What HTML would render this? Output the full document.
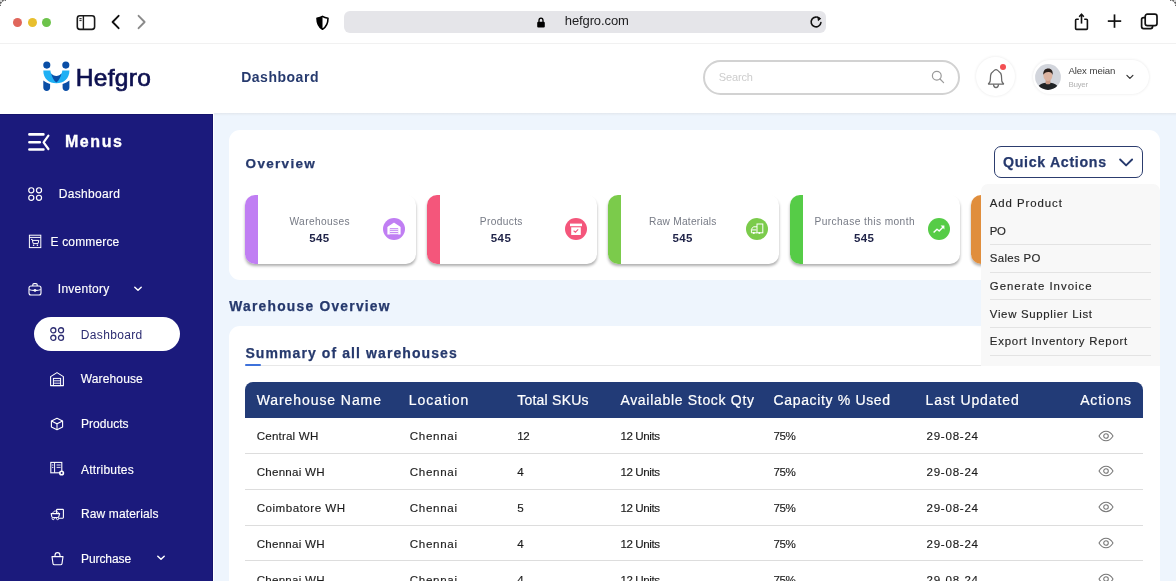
<!DOCTYPE html>
<html><head><meta charset="utf-8"><style>
*{box-sizing:border-box;margin:0;padding:0}
html,body{will-change:transform;width:1176px;height:581px;overflow:hidden;background:#fff;font-family:"Liberation Sans",sans-serif}
.a{position:absolute}
.t{position:absolute;line-height:1;white-space:nowrap}
.sk{-webkit-text-stroke:0.3px currentColor}
svg{overflow:visible}
</style></head><body>
<div class="a" style="left:0px;top:0px;width:1176px;height:44px;background:#fff"></div>
<div class="a" style="left:0px;top:43px;width:1176px;height:1px;background:#f1f1f1"></div>
<div class="a" style="left:13.299999999999999px;top:17.7px;width:9.2px;height:9.2px;border-radius:50%;background:#e0665b"></div>
<div class="a" style="left:27.9px;top:17.7px;width:9.2px;height:9.2px;border-radius:50%;background:#e8bf2e"></div>
<div class="a" style="left:42.199999999999996px;top:17.7px;width:9.2px;height:9.2px;border-radius:50%;background:#6dc34b"></div>
<svg class="a" style="left:0px;top:0px" width="8" height="8" viewBox="0 0 8 8"><path d="M0 0 H6 A6 6 0 0 0 0 6 Z" fill="#d6d6d6"/><path d="M6 0 A6 6 0 0 0 0 6" fill="none" stroke="#111" stroke-width="1.2" stroke-dasharray="1.4 1.2"/></svg>
<svg class="a" style="left:1168px;top:0px" width="8" height="8" viewBox="0 0 8 8"><path d="M8 0 H2 A6 6 0 0 1 8 6 Z" fill="#d6d6d6"/><path d="M2 0 A6 6 0 0 1 8 6" fill="none" stroke="#111" stroke-width="1.2" stroke-dasharray="1.4 1.2"/></svg>
<svg class="a" style="left:76px;top:14px" width="20" height="17" viewBox="0 0 20 17"><rect x="1.3" y="1.8" width="17.3" height="13.6" rx="2.6" fill="none" stroke="#1a1a1a" stroke-width="1.6"/><line x1="7.4" y1="2" x2="7.4" y2="15.4" stroke="#1a1a1a" stroke-width="1.4"/><rect x="3.4" y="4" width="2.2" height="1.2" fill="#333"/><rect x="3.4" y="5.9" width="2.2" height="1.2" fill="#333"/></svg>
<svg class="a" style="left:110px;top:14px" width="12" height="16" viewBox="0 0 12 16"><path d="M8.6 1.8 L2.6 8 L8.6 14.2" fill="none" stroke="#111" stroke-width="1.9" stroke-linecap="round" stroke-linejoin="round"/></svg>
<svg class="a" style="left:136px;top:14px" width="12" height="16" viewBox="0 0 12 16"><path d="M2.6 1.8 L8.6 8 L2.6 14.2" fill="none" stroke="#8a8a8a" stroke-width="1.9" stroke-linecap="round" stroke-linejoin="round"/></svg>
<svg class="a" style="left:314px;top:14px" width="17" height="17" viewBox="0 0 17 17"><path d="M8.5 2.4 C6.8 3.4 4.8 3.9 3 4.2 C3 9.2 4.6 12.8 8.5 15.3 C12.4 12.8 14 9.2 14 4.2 C12.2 3.9 10.2 3.4 8.5 2.4 Z" fill="#fff" stroke="#000" stroke-width="1.6" stroke-linejoin="round"/><path d="M8.5 2.4 C6.8 3.4 4.8 3.9 3 4.2 C3 9.2 4.6 12.8 8.5 15.3 Z" fill="#000"/></svg>
<div class="a" style="left:344px;top:11px;width:482px;height:22px;background:#e5e5e9;border-radius:6px"></div>
<svg class="a" style="left:535px;top:15px" width="12" height="14" viewBox="0 0 12 14"><path d="M4 7 V5.6 C4 4 4.9 3.2 6 3.2 C7.1 3.2 8 4 8 5.6 V7" fill="none" stroke="#000" stroke-width="1.3"/><rect x="2.2" y="6.8" width="7.6" height="5.8" rx="1.1" fill="#000"/></svg>
<div class="t" style="left:564.80px;top:13.95px;font-size:13px;letter-spacing:-0.111px;color:#1d1d1f">hefgro.com</div>
<svg class="a" style="left:808px;top:14px" width="16" height="16" viewBox="0 0 16 16"><path d="M11.6 4.6 A4.9 4.9 0 1 0 12.9 8.6" fill="none" stroke="#111" stroke-width="1.6" stroke-linecap="round"/><path d="M9.2 2.2 L13.2 4.4 L10 7.2 Z" fill="#111"/></svg>
<svg class="a" style="left:1073px;top:12px" width="17" height="19" viewBox="0 0 17 19"><path d="M5.8 7.2 H3.6 C3 7.2 2.6 7.6 2.6 8.2 V16.4 C2.6 17 3 17.4 3.6 17.4 H13.4 C14 17.4 14.4 17 14.4 16.4 V8.2 C14.4 7.6 14 7.2 13.4 7.2 H11.2" fill="none" stroke="#111" stroke-width="1.6"/><line x1="8.5" y1="3" x2="8.5" y2="11.6" stroke="#111" stroke-width="1.6"/><path d="M6.2 4.8 L8.5 2.2 L10.8 4.8" fill="none" stroke="#111" stroke-width="1.6" stroke-linejoin="round"/></svg>
<svg class="a" style="left:1106px;top:13px" width="17" height="17" viewBox="0 0 17 17"><line x1="8.5" y1="1.4" x2="8.5" y2="14.8" stroke="#111" stroke-width="1.7"/><line x1="1.8" y1="8.1" x2="15.2" y2="8.1" stroke="#111" stroke-width="1.7"/></svg>
<svg class="a" style="left:1139px;top:12px" width="20" height="19" viewBox="0 0 20 19"><rect x="6.2" y="2.2" width="11.8" height="11.4" rx="2.2" fill="none" stroke="#111" stroke-width="1.7"/><path d="M6 5.6 H4.6 C3.4 5.6 2.6 6.4 2.6 7.6 V14.6 C2.6 15.8 3.4 16.6 4.6 16.6 H11.6 C12.8 16.6 13.6 15.8 13.6 14.6 V14" fill="none" stroke="#111" stroke-width="1.7"/></svg>
<div class="a" style="left:0px;top:44px;width:1176px;height:70px;background:#fff"></div>
<svg class="a" style="left:40px;top:58px" width="32" height="36" viewBox="0 0 32 36">
<path d="M3.3 12.4 H10.4 C10.6 16 13 18.1 16.35 18.1 C19.7 18.1 22.1 16 22.3 12.4 H29.4 C29.4 20.6 23.6 25.2 16.35 25.2 C9.1 25.2 3.3 20.6 3.3 12.4 Z" fill="#1fb0f4"/>
<path d="M11.2 15.6 C12.6 17.3 14.3 18.1 16.35 18.1 C18.4 18.1 20.1 17.3 21.5 15.6 C20.6 19.6 18.8 22.8 16.35 24.6 C13.9 22.8 12.1 19.6 11.2 15.6 Z" fill="#0a4ea6"/>
<circle cx="6.8" cy="7.1" r="3.55" fill="#0a4ea6"/><circle cx="25.8" cy="7.1" r="3.55" fill="#0a4ea6"/>
<path d="M3.3 22.6 C5.2 24.2 7.4 25.2 10.1 25.9 V29.6 C10.1 31.6 8.6 33 6.7 33 C4.8 33 3.3 31.6 3.3 29.6 Z" fill="#0a4ea6"/>
<path d="M29.4 22.6 C27.5 24.2 25.3 25.2 22.6 25.9 V29.6 C22.6 31.6 24.1 33 26 33 C27.9 33 29.4 31.6 29.4 29.6 Z" fill="#0a4ea6"/>
</svg>
<div class="t" style="left:75.80px;top:66.08px;font-size:24.5px;letter-spacing:0.298px;color:#0e1150;-webkit-text-stroke:0.7px #0e1150">Hefgro</div>
<div class="t" style="left:241.20px;top:70.40px;font-size:14px;letter-spacing:0.516px;font-weight:bold;color:#263a6e">Dashboard</div>
<div class="a" style="left:703px;top:59.5px;width:257px;height:35.5px;border:2px solid #d2d2d2;border-radius:18px;background:#fff"></div>
<div class="t" style="left:718.70px;top:71.95px;font-size:11px;letter-spacing:-0.127px;color:#cdcdcd">Search</div>
<svg class="a" style="left:930px;top:69px" width="16" height="16" viewBox="0 0 16 16"><circle cx="6.8" cy="6.8" r="4.4" fill="none" stroke="#9a9a9a" stroke-width="1.2"/><line x1="10" y1="10" x2="13.6" y2="13.6" stroke="#9a9a9a" stroke-width="1.2" stroke-linecap="round"/></svg>
<div class="a" style="left:976px;top:56.6px;width:39px;height:39.8px;border-radius:50%;background:#fff;box-shadow:0 0 3px rgba(0,0,0,0.10)"></div>
<svg class="a" style="left:986px;top:67px" width="20" height="24" viewBox="0 0 20 24"><path d="M10 2.6 C9 2.6 8.4 3.4 7.4 4.2 C5.6 5.3 4.8 6.4 4.6 8.4 L4.2 14.2 C4 15.3 3.3 16.1 2.5 16.5 V17 H17.5 V16.5 C16.7 16.1 16 15.3 15.8 14.2 L15.4 8.4 C15.2 6.4 14.4 5.3 12.6 4.2 C11.6 3.4 11 2.6 10 2.6 Z" fill="none" stroke="#6a6a6a" stroke-width="1.25" stroke-linejoin="round"/><path d="M7.5 17.3 C7.6 19.5 8.7 20.6 10 20.6 C11.3 20.6 12.4 19.5 12.5 17.3" fill="none" stroke="#6a6a6a" stroke-width="1.25"/></svg>
<div class="a" style="left:999.9px;top:63.5px;width:6.4px;height:6.4px;border-radius:50%;background:#f34f52"></div>
<div class="a" style="left:1032.5px;top:59.8px;width:116px;height:34px;border-radius:17px;background:#fff;box-shadow:0 0 3px rgba(0,0,0,0.10)"></div>
<svg class="a" style="left:1035px;top:64.3px" width="26" height="26" viewBox="0 0 26 26"><defs><clipPath id="av"><circle cx="13" cy="13" r="12.9"/></clipPath></defs>
<circle cx="13" cy="13" r="12.9" fill="#d2d5dc"/>
<g clip-path="url(#av)"><path d="M1.5 27 C2.5 20.5 7 18.6 13 18.4 C19 18.6 23.5 20.5 24.5 27 Z" fill="#202326"/>
<path d="M10.6 14.5 H15.4 V19.4 C14.2 20.6 11.8 20.6 10.6 19.4 Z" fill="#c99a86"/>
<ellipse cx="12.9" cy="11.6" rx="4.5" ry="5.3" fill="#dcb3a0"/>
<path d="M8.3 10.8 C8 6.6 10.2 4.6 13.2 4.6 C16.4 4.6 18.2 6.8 17.6 11 C17 8.6 15.6 7.8 13.2 8 C10.8 8.2 9.2 9 8.3 10.8 Z" fill="#2a1f1b"/></g></svg>
<div class="t" style="left:1068.40px;top:66.04px;font-size:9.6px;letter-spacing:-0.047px;color:#3b3b3b">Alex meian</div>
<div class="t" style="left:1068.40px;top:80.50px;font-size:8px;letter-spacing:-0.309px;color:#b3b3b3">Buyer</div>
<svg class="a" style="left:1125px;top:74px" width="10" height="7" viewBox="0 0 10 7"><path d="M1.9 1.4 L4.9 4.4 L7.9 1.4" fill="none" stroke="#333" stroke-width="1.2" stroke-linecap="round" stroke-linejoin="round"/></svg>
<div class="a" style="left:0px;top:113.8px;width:213px;height:467.2px;background:#1b1a7c;box-shadow:inset -1px 1px 0 #15146c"></div>
<svg class="a" style="left:26px;top:131px" width="26" height="22" viewBox="0 0 26 22"><path d="M3.4 3.4 H17.4 M3.4 11.3 H13.8 M3.4 18.5 H17.4" stroke="#fff" stroke-width="2.6" stroke-linecap="round"/><path d="M22.4 4.6 L17.6 11.3 L22.4 18" fill="none" stroke="#fff" stroke-width="2.2" stroke-linecap="round" stroke-linejoin="round"/></svg>
<div class="t" style="left:64.90px;top:134.30px;font-size:16px;letter-spacing:1.582px;font-weight:bold;color:#fff;-webkit-text-stroke:0.35px #fff">Menus</div>
<svg class="a" style="left:27.5px;top:186.8px" width="15" height="15" viewBox="0 0 15 15"><circle cx="3.3" cy="3.3" r="2.55" fill="none" stroke="#fff" stroke-width="1.2"/><circle cx="3.3" cy="10.8" r="2.55" fill="none" stroke="#fff" stroke-width="1.2"/><circle cx="11.0" cy="3.3" r="2.55" fill="none" stroke="#fff" stroke-width="1.2"/><circle cx="11.0" cy="10.8" r="2.55" fill="none" stroke="#fff" stroke-width="1.2"/></svg>
<div class="t" style="left:58.80px;top:188.00px;font-size:12px;letter-spacing:0.296px;color:#fff;-webkit-text-stroke:0.15px #fff">Dashboard</div>
<svg class="a" style="left:28px;top:234px" width="14" height="15" viewBox="0 0 14 15"><rect x="1.4" y="1.2" width="11.4" height="12.4" fill="none" stroke="#fff" stroke-width="1"/><line x1="1.4" y1="3.4" x2="12.8" y2="3.4" stroke="#fff" stroke-width="1"/><path d="M3 5.4 H4.2 L5.2 9.6 H10 L10.8 6.4 H4.6" fill="none" stroke="#fff" stroke-width="1"/><circle cx="5.6" cy="11.2" r="0.8" fill="#fff"/><circle cx="9.4" cy="11.2" r="0.8" fill="#fff"/></svg>
<div class="t" style="left:50.60px;top:235.50px;font-size:12px;letter-spacing:0.147px;color:#fff;-webkit-text-stroke:0.15px #fff">E commerce</div>
<svg class="a" style="left:27px;top:282px" width="16" height="14" viewBox="0 0 16 14"><rect x="2" y="4" width="12" height="9" rx="2" fill="none" stroke="#fff" stroke-width="1.1"/><path d="M5.8 4 V2.8 C5.8 2 6.3 1.6 7 1.6 H9 C9.7 1.6 10.2 2 10.2 2.8 V4" fill="none" stroke="#fff" stroke-width="1.1"/><path d="M2.2 7.6 C4.6 8.8 11.4 8.8 13.8 7.6" fill="none" stroke="#fff" stroke-width="1"/><ellipse cx="8" cy="8.4" rx="1.4" ry="0.9" fill="none" stroke="#fff" stroke-width="0.9"/></svg>
<div class="t" style="left:57.80px;top:283.40px;font-size:12px;letter-spacing:0.268px;color:#fff;-webkit-text-stroke:0.15px #fff">Inventory</div>
<svg class="a" style="left:133px;top:285px" width="10" height="8" viewBox="0 0 10 8"><path d="M1.8 2.2 L5 5.2 L8.2 2.2" fill="none" stroke="#fff" stroke-width="1.5" stroke-linecap="round" stroke-linejoin="round"/></svg>
<div class="a" style="left:33.5px;top:317px;width:146.5px;height:34px;background:#fff;border-radius:17px"></div>
<svg class="a" style="left:49.5px;top:326.8px" width="15" height="15" viewBox="0 0 15 15"><circle cx="3.3" cy="3.3" r="2.55" fill="none" stroke="#2d2d72" stroke-width="1.3"/><circle cx="3.3" cy="10.8" r="2.55" fill="none" stroke="#2d2d72" stroke-width="1.3"/><circle cx="11.0" cy="3.3" r="2.55" fill="none" stroke="#2d2d72" stroke-width="1.3"/><circle cx="11.0" cy="10.8" r="2.55" fill="none" stroke="#2d2d72" stroke-width="1.3"/></svg>
<div class="t" style="left:80.80px;top:328.50px;font-size:12px;letter-spacing:0.346px;color:#2d2d72">Dashboard</div>
<svg class="a" style="left:49px;top:371px" width="16" height="16" viewBox="0 0 16 16"><path d="M1.6 14.6 V5.6 L8 1.6 L14.4 5.6 V14.6 Z" fill="none" stroke="#fff" stroke-width="1.1" stroke-linejoin="round"/><rect x="4.4" y="7.4" width="7.2" height="7.2" fill="none" stroke="#fff" stroke-width="1"/><line x1="4.4" y1="9.8" x2="11.6" y2="9.8" stroke="#fff" stroke-width="0.9"/><line x1="4.4" y1="12.2" x2="11.6" y2="12.2" stroke="#fff" stroke-width="0.9"/></svg>
<div class="t" style="left:80.80px;top:373.00px;font-size:12px;letter-spacing:0.132px;color:#fff;-webkit-text-stroke:0.15px #fff">Warehouse</div>
<svg class="a" style="left:50px;top:417px" width="14" height="14" viewBox="0 0 14 14"><path d="M7 1.2 L12.6 4 V10 L7 12.8 L1.4 10 V4 Z" fill="none" stroke="#fff" stroke-width="1.1" stroke-linejoin="round"/><path d="M1.4 4 L7 6.8 L12.6 4 M7 6.8 V12.8" fill="none" stroke="#fff" stroke-width="1.1"/></svg>
<div class="t" style="left:81.00px;top:418.20px;font-size:12px;letter-spacing:0.021px;color:#fff;-webkit-text-stroke:0.15px #fff">Products</div>
<svg class="a" style="left:50px;top:461px" width="15" height="16" viewBox="0 0 15 16"><rect x="0.8" y="1.4" width="11" height="10.4" fill="none" stroke="#fff" stroke-width="1.1"/><line x1="4.6" y1="1.4" x2="4.6" y2="11.8" stroke="#fff" stroke-width="1"/><line x1="6.6" y1="4" x2="10.6" y2="4" stroke="#fff" stroke-width="0.9"/><line x1="6.6" y1="6.4" x2="10.6" y2="6.4" stroke="#fff" stroke-width="0.9"/><line x1="2" y1="4" x2="3.4" y2="4" stroke="#fff" stroke-width="0.9"/><line x1="2" y1="6.4" x2="3.4" y2="6.4" stroke="#fff" stroke-width="0.9"/><circle cx="11.6" cy="12" r="2.6" fill="#fff"/><circle cx="11.6" cy="12" r="1" fill="#1b1a7c"/></svg>
<div class="t" style="left:81.00px;top:463.60px;font-size:12px;letter-spacing:0.223px;color:#fff;-webkit-text-stroke:0.15px #fff">Attributes</div>
<svg class="a" style="left:50px;top:507px" width="15" height="13" viewBox="0 0 15 13"><rect x="6.6" y="2.4" width="6.8" height="8.8" rx="0.6" fill="none" stroke="#fff" stroke-width="1.1"/><path d="M1.2 6.6 H9.6 L8.8 9.6 C8.6 10.3 8.1 10.6 7.4 10.6 H3.2 C2.5 10.6 2 10.3 1.8 9.6 Z" fill="#1b1a7c" stroke="#fff" stroke-width="1.1" stroke-linejoin="round"/><path d="M2.6 6.6 C3 4.9 4.2 4 5.6 4 C7 4 8.2 4.9 8.6 6.6" fill="none" stroke="#fff" stroke-width="1"/><circle cx="3.2" cy="11.6" r="1.1" fill="#1b1a7c" stroke="#fff" stroke-width="0.9"/><circle cx="7.6" cy="11.6" r="1.1" fill="#1b1a7c" stroke="#fff" stroke-width="0.9"/></svg>
<div class="t" style="left:81.00px;top:508.40px;font-size:12px;letter-spacing:0.132px;color:#fff;-webkit-text-stroke:0.15px #fff">Raw materials</div>
<svg class="a" style="left:50px;top:551px" width="15" height="15" viewBox="0 0 15 15"><path d="M2 5.6 H13 L12 12.6 C11.9 13.4 11.3 13.8 10.6 13.8 H4.4 C3.7 13.8 3.1 13.4 3 12.6 Z" fill="none" stroke="#fff" stroke-width="1.1" stroke-linejoin="round"/><path d="M5 5.6 V4.4 C5 2.6 6 1.6 7.5 1.6 C9 1.6 10 2.6 10 4.4 V5.6" fill="none" stroke="#fff" stroke-width="1.1"/></svg>
<div class="t" style="left:81.00px;top:553.00px;font-size:12px;letter-spacing:-0.089px;color:#fff;-webkit-text-stroke:0.15px #fff">Purchase</div>
<svg class="a" style="left:156px;top:554px" width="10" height="8" viewBox="0 0 10 8"><path d="M1.8 2.2 L5 5.2 L8.2 2.2" fill="none" stroke="#fff" stroke-width="1.5" stroke-linecap="round" stroke-linejoin="round"/></svg>
<div class="a" style="left:214px;top:113px;width:962px;height:468px;background:linear-gradient(#e2e7ee 0px,#e9eff6 1.5px,#eef5fd 3px)"></div>
<div class="a" style="left:228.5px;top:130px;width:931.5px;height:150px;background:#fff;border-radius:11px"></div>
<div class="t" style="left:245.60px;top:156.72px;font-size:13.5px;letter-spacing:1.309px;font-weight:bold;color:#26396d;-webkit-text-stroke:0.25px #26396d">Overview</div>
<div class="a" style="left:994.2px;top:146.4px;width:148.5px;height:31.2px;border:1px solid #2c3d6e;border-radius:7px"></div>
<div class="t" style="left:1003.00px;top:155.13px;font-size:14.2px;letter-spacing:0.683px;font-weight:bold;color:#26396d;-webkit-text-stroke:0.25px #26396d">Quick Actions</div>
<svg class="a" style="left:1117px;top:156px" width="18" height="12" viewBox="0 0 18 12"><path d="M3.1 3.5 L9.1 9.4 L15.1 3.5" fill="none" stroke="#26396d" stroke-width="1.9" stroke-linecap="round" stroke-linejoin="round"/></svg>
<div class="a" style="left:245px;top:194.8px;width:170.5px;height:69px;background:#fff;border-radius:10px;box-shadow:0 2.5px 3px -0.5px rgba(0,0,0,0.32)"></div>
<div class="a" style="left:245px;top:194.8px;width:13px;height:69px;background:#c07ef3;border-radius:10px 0 0 10px"></div>
<div class="t" style="left:289.50px;top:217.23px;font-size:10.2px;letter-spacing:0.365px;color:#767a85">Warehouses</div>
<div class="t" style="left:309.20px;top:233.03px;font-size:11.5px;letter-spacing:0.404px;font-weight:bold;color:#1f2348">545</div>
<div class="a" style="left:383px;top:218px;width:22px;height:22px;border-radius:50%;background:#c07ef3"></div>
<div class="a" style="left:426.6px;top:194.8px;width:170.5px;height:69px;background:#fff;border-radius:10px;box-shadow:0 2.5px 3px -0.5px rgba(0,0,0,0.32)"></div>
<div class="a" style="left:426.6px;top:194.8px;width:13px;height:69px;background:#f4567b;border-radius:10px 0 0 10px"></div>
<div class="t" style="left:479.85px;top:217.23px;font-size:10.2px;letter-spacing:0.342px;color:#767a85">Products</div>
<div class="t" style="left:490.80px;top:233.03px;font-size:11.5px;letter-spacing:0.404px;font-weight:bold;color:#1f2348">545</div>
<div class="a" style="left:564.6px;top:218px;width:22px;height:22px;border-radius:50%;background:#f4567b"></div>
<div class="a" style="left:608.2px;top:194.8px;width:170.5px;height:69px;background:#fff;border-radius:10px;box-shadow:0 2.5px 3px -0.5px rgba(0,0,0,0.32)"></div>
<div class="a" style="left:608.2px;top:194.8px;width:13px;height:69px;background:#7bcb4b;border-radius:10px 0 0 10px"></div>
<div class="t" style="left:649.05px;top:217.23px;font-size:10.2px;letter-spacing:0.238px;color:#767a85">Raw Materials</div>
<div class="t" style="left:672.40px;top:233.03px;font-size:11.5px;letter-spacing:0.404px;font-weight:bold;color:#1f2348">545</div>
<div class="a" style="left:746.2px;top:218px;width:22px;height:22px;border-radius:50%;background:#7bcb4b"></div>
<div class="a" style="left:789.7px;top:194.8px;width:170.5px;height:69px;background:#fff;border-radius:10px;box-shadow:0 2.5px 3px -0.5px rgba(0,0,0,0.32)"></div>
<div class="a" style="left:789.7px;top:194.8px;width:13px;height:69px;background:#56cc47;border-radius:10px 0 0 10px"></div>
<div class="t" style="left:814.50px;top:217.23px;font-size:10.2px;letter-spacing:0.400px;color:#767a85">Purchase this month</div>
<div class="t" style="left:853.90px;top:233.03px;font-size:11.5px;letter-spacing:0.404px;font-weight:bold;color:#1f2348">545</div>
<div class="a" style="left:927.7px;top:218px;width:22px;height:22px;border-radius:50%;background:#56cc47"></div>
<div class="a" style="left:971.2px;top:194.8px;width:170.5px;height:69px;background:#fff;border-radius:10px;box-shadow:0 2.5px 3px -0.5px rgba(0,0,0,0.32)"></div>
<div class="a" style="left:971.2px;top:194.8px;width:13px;height:69px;background:#e08e3d;border-radius:10px 0 0 10px"></div>
<svg class="a" style="left:383px;top:218px" width="22" height="22" viewBox="0 0 22 22"><path d="M4.4 16.6 V9.6 C4.4 9.1 4.6 8.8 5 8.5 L10.4 5 C10.8 4.8 11.2 4.8 11.6 5 L17 8.5 C17.4 8.8 17.6 9.1 17.6 9.6 V16.6 Z" fill="#fff"/><rect x="6.8" y="10.2" width="8.4" height="6.4" fill="#c07ef3"/><rect x="6.8" y="11.3" width="8.4" height="0.9" fill="#fff"/><rect x="6.8" y="13.1" width="8.4" height="0.9" fill="#fff"/><rect x="6.8" y="14.9" width="8.4" height="0.9" fill="#fff"/></svg>
<svg class="a" style="left:564.6px;top:218px" width="22" height="22" viewBox="0 0 22 22"><rect x="5" y="5.6" width="12" height="2.6" fill="#fff"/><rect x="6.2" y="9.3" width="9.6" height="7.7" fill="#fff"/><path d="M8.6 12.8 L10.4 14.2 L13.2 11.4" fill="none" stroke="#f2577a" stroke-width="1.1"/></svg>
<svg class="a" style="left:746.2px;top:218px" width="22" height="22" viewBox="0 0 22 22"><rect x="11" y="6" width="5.8" height="8.8" fill="none" stroke="#fff" stroke-width="1"/><path d="M11 8.8 H7.4 L5.4 11.2 V14.8 H11" fill="none" stroke="#fff" stroke-width="1"/><circle cx="7.8" cy="15" r="1" fill="#fff"/><circle cx="13.4" cy="15" r="1" fill="#fff"/><rect x="5.8" y="11.4" width="4.6" height="1" fill="#fff"/></svg>
<svg class="a" style="left:927.7px;top:218px" width="22" height="22" viewBox="0 0 22 22"><path d="M5.6 14.6 L9 11.2 L11.2 13 L15.6 8.4" fill="none" stroke="#fff" stroke-width="1.4" stroke-linejoin="round"/><path d="M12.6 7.6 H16.4 V11.4 Z" fill="#fff"/></svg>
<div class="t" style="left:229.30px;top:300.27px;font-size:13.8px;letter-spacing:1.246px;font-weight:bold;color:#26396d;-webkit-text-stroke:0.25px #26396d">Warehouse Overview</div>
<div class="a" style="left:228.8px;top:325.9px;width:931.2px;height:300px;background:#fff;border-radius:11px"></div>
<div class="t" style="left:245.40px;top:345.60px;font-size:14px;letter-spacing:1.092px;font-weight:bold;color:#26396d;-webkit-text-stroke:0.25px #26396d">Summary of all warehouses</div>
<div class="a" style="left:245px;top:365.2px;width:898px;height:1px;background:#e8e8e8"></div>
<div class="a" style="left:245px;top:364.2px;width:16px;height:2.2px;background:#3e72db;border-radius:1px"></div>
<div class="a" style="left:245.1px;top:382.1px;width:898px;height:35.9px;background:#223b77;border-radius:8px 8px 0 0"></div>
<div class="t" style="left:256.70px;top:393.40px;font-size:14px;letter-spacing:0.921px;color:#fff;-webkit-text-stroke:0.2px #fff">Warehouse Name</div>
<div class="t" style="left:408.80px;top:393.40px;font-size:14px;letter-spacing:0.951px;color:#fff;-webkit-text-stroke:0.2px #fff">Location</div>
<div class="t" style="left:517.20px;top:393.40px;font-size:14px;letter-spacing:0.239px;color:#fff;-webkit-text-stroke:0.2px #fff">Total SKUs</div>
<div class="t" style="left:620.40px;top:393.40px;font-size:14px;letter-spacing:0.693px;color:#fff;-webkit-text-stroke:0.2px #fff">Available Stock Qty</div>
<div class="t" style="left:773.50px;top:393.40px;font-size:14px;letter-spacing:0.658px;color:#fff;-webkit-text-stroke:0.2px #fff">Capacity % Used</div>
<div class="t" style="left:925.50px;top:393.40px;font-size:14px;letter-spacing:0.909px;color:#fff;-webkit-text-stroke:0.2px #fff">Last Updated</div>
<div class="t" style="left:1080.20px;top:393.40px;font-size:14px;letter-spacing:0.815px;color:#fff;-webkit-text-stroke:0.2px #fff">Actions</div>
<div class="t" style="left:256.70px;top:430.14px;font-size:11.6px;letter-spacing:0.185px;color:#1c1c1c;-webkit-text-stroke:0.15px #1c1c1c">Central WH</div>
<div class="t" style="left:409.80px;top:430.14px;font-size:11.6px;letter-spacing:0.665px;color:#1c1c1c;-webkit-text-stroke:0.15px #1c1c1c">Chennai</div>
<div class="t" style="left:517.20px;top:430.14px;font-size:11.6px;letter-spacing:-0.400px;color:#1c1c1c;-webkit-text-stroke:0.15px #1c1c1c">12</div>
<div class="t" style="left:620.40px;top:430.14px;font-size:11.6px;letter-spacing:-0.400px;color:#1c1c1c;-webkit-text-stroke:0.15px #1c1c1c">12 Units</div>
<div class="t" style="left:773.50px;top:430.14px;font-size:11.6px;letter-spacing:-0.400px;color:#1c1c1c;-webkit-text-stroke:0.15px #1c1c1c">75%</div>
<div class="t" style="left:926.50px;top:430.14px;font-size:11.6px;letter-spacing:0.734px;color:#1c1c1c;-webkit-text-stroke:0.15px #1c1c1c">29-08-24</div>
<svg class="a" style="left:1098px;top:429.5px" width="16" height="12" viewBox="0 0 16 12"><path d="M1 6 C3 2.6 5.4 1.2 8 1.2 C10.6 1.2 13 2.6 15 6 C13 9.4 10.6 10.8 8 10.8 C5.4 10.8 3 9.4 1 6 Z" fill="none" stroke="#777" stroke-width="1.05"/><circle cx="8" cy="6" r="2.3" fill="none" stroke="#777" stroke-width="1.05"/></svg>
<div class="a" style="left:245px;top:453.3px;width:898px;height:1px;background:#dddddd"></div>
<div class="t" style="left:256.70px;top:466.09px;font-size:11.6px;letter-spacing:0.239px;color:#1c1c1c;-webkit-text-stroke:0.15px #1c1c1c">Chennai WH</div>
<div class="t" style="left:409.80px;top:466.09px;font-size:11.6px;letter-spacing:0.665px;color:#1c1c1c;-webkit-text-stroke:0.15px #1c1c1c">Chennai</div>
<div class="t" style="left:517.20px;top:466.09px;font-size:11.6px;letter-spacing:0.000px;color:#1c1c1c;-webkit-text-stroke:0.15px #1c1c1c">4</div>
<div class="t" style="left:620.40px;top:466.09px;font-size:11.6px;letter-spacing:-0.400px;color:#1c1c1c;-webkit-text-stroke:0.15px #1c1c1c">12 Units</div>
<div class="t" style="left:773.50px;top:466.09px;font-size:11.6px;letter-spacing:-0.400px;color:#1c1c1c;-webkit-text-stroke:0.15px #1c1c1c">75%</div>
<div class="t" style="left:926.50px;top:466.09px;font-size:11.6px;letter-spacing:0.734px;color:#1c1c1c;-webkit-text-stroke:0.15px #1c1c1c">29-08-24</div>
<svg class="a" style="left:1098px;top:465.45px" width="16" height="12" viewBox="0 0 16 12"><path d="M1 6 C3 2.6 5.4 1.2 8 1.2 C10.6 1.2 13 2.6 15 6 C13 9.4 10.6 10.8 8 10.8 C5.4 10.8 3 9.4 1 6 Z" fill="none" stroke="#777" stroke-width="1.05"/><circle cx="8" cy="6" r="2.3" fill="none" stroke="#777" stroke-width="1.05"/></svg>
<div class="a" style="left:245px;top:489.0px;width:898px;height:1px;background:#dddddd"></div>
<div class="t" style="left:256.70px;top:502.04px;font-size:11.6px;letter-spacing:0.501px;color:#1c1c1c;-webkit-text-stroke:0.15px #1c1c1c">Coimbatore WH</div>
<div class="t" style="left:409.80px;top:502.04px;font-size:11.6px;letter-spacing:0.665px;color:#1c1c1c;-webkit-text-stroke:0.15px #1c1c1c">Chennai</div>
<div class="t" style="left:517.20px;top:502.04px;font-size:11.6px;letter-spacing:0.000px;color:#1c1c1c;-webkit-text-stroke:0.15px #1c1c1c">5</div>
<div class="t" style="left:620.40px;top:502.04px;font-size:11.6px;letter-spacing:-0.400px;color:#1c1c1c;-webkit-text-stroke:0.15px #1c1c1c">12 Units</div>
<div class="t" style="left:773.50px;top:502.04px;font-size:11.6px;letter-spacing:-0.400px;color:#1c1c1c;-webkit-text-stroke:0.15px #1c1c1c">75%</div>
<div class="t" style="left:926.50px;top:502.04px;font-size:11.6px;letter-spacing:0.734px;color:#1c1c1c;-webkit-text-stroke:0.15px #1c1c1c">29-08-24</div>
<svg class="a" style="left:1098px;top:501.4px" width="16" height="12" viewBox="0 0 16 12"><path d="M1 6 C3 2.6 5.4 1.2 8 1.2 C10.6 1.2 13 2.6 15 6 C13 9.4 10.6 10.8 8 10.8 C5.4 10.8 3 9.4 1 6 Z" fill="none" stroke="#777" stroke-width="1.05"/><circle cx="8" cy="6" r="2.3" fill="none" stroke="#777" stroke-width="1.05"/></svg>
<div class="a" style="left:245px;top:524.7px;width:898px;height:1px;background:#dddddd"></div>
<div class="t" style="left:256.70px;top:537.99px;font-size:11.6px;letter-spacing:0.239px;color:#1c1c1c;-webkit-text-stroke:0.15px #1c1c1c">Chennai WH</div>
<div class="t" style="left:409.80px;top:537.99px;font-size:11.6px;letter-spacing:0.665px;color:#1c1c1c;-webkit-text-stroke:0.15px #1c1c1c">Chennai</div>
<div class="t" style="left:517.20px;top:537.99px;font-size:11.6px;letter-spacing:0.000px;color:#1c1c1c;-webkit-text-stroke:0.15px #1c1c1c">4</div>
<div class="t" style="left:620.40px;top:537.99px;font-size:11.6px;letter-spacing:-0.400px;color:#1c1c1c;-webkit-text-stroke:0.15px #1c1c1c">12 Units</div>
<div class="t" style="left:773.50px;top:537.99px;font-size:11.6px;letter-spacing:-0.400px;color:#1c1c1c;-webkit-text-stroke:0.15px #1c1c1c">75%</div>
<div class="t" style="left:926.50px;top:537.99px;font-size:11.6px;letter-spacing:0.734px;color:#1c1c1c;-webkit-text-stroke:0.15px #1c1c1c">29-08-24</div>
<svg class="a" style="left:1098px;top:537.35px" width="16" height="12" viewBox="0 0 16 12"><path d="M1 6 C3 2.6 5.4 1.2 8 1.2 C10.6 1.2 13 2.6 15 6 C13 9.4 10.6 10.8 8 10.8 C5.4 10.8 3 9.4 1 6 Z" fill="none" stroke="#777" stroke-width="1.05"/><circle cx="8" cy="6" r="2.3" fill="none" stroke="#777" stroke-width="1.05"/></svg>
<div class="a" style="left:245px;top:560.4px;width:898px;height:1px;background:#dddddd"></div>
<div class="t" style="left:256.70px;top:573.94px;font-size:11.6px;letter-spacing:0.239px;color:#1c1c1c;-webkit-text-stroke:0.15px #1c1c1c">Chennai WH</div>
<div class="t" style="left:409.80px;top:573.94px;font-size:11.6px;letter-spacing:0.665px;color:#1c1c1c;-webkit-text-stroke:0.15px #1c1c1c">Chennai</div>
<div class="t" style="left:517.20px;top:573.94px;font-size:11.6px;letter-spacing:0.000px;color:#1c1c1c;-webkit-text-stroke:0.15px #1c1c1c">4</div>
<div class="t" style="left:620.40px;top:573.94px;font-size:11.6px;letter-spacing:-0.400px;color:#1c1c1c;-webkit-text-stroke:0.15px #1c1c1c">12 Units</div>
<div class="t" style="left:773.50px;top:573.94px;font-size:11.6px;letter-spacing:-0.400px;color:#1c1c1c;-webkit-text-stroke:0.15px #1c1c1c">75%</div>
<div class="t" style="left:926.50px;top:573.94px;font-size:11.6px;letter-spacing:0.734px;color:#1c1c1c;-webkit-text-stroke:0.15px #1c1c1c">29-08-24</div>
<svg class="a" style="left:1098px;top:573.3px" width="16" height="12" viewBox="0 0 16 12"><path d="M1 6 C3 2.6 5.4 1.2 8 1.2 C10.6 1.2 13 2.6 15 6 C13 9.4 10.6 10.8 8 10.8 C5.4 10.8 3 9.4 1 6 Z" fill="none" stroke="#777" stroke-width="1.05"/><circle cx="8" cy="6" r="2.3" fill="none" stroke="#777" stroke-width="1.05"/></svg>
<div class="a" style="left:981.4px;top:184px;width:178.9px;height:182px;background:#f8f8f8;border-radius:7px 7px 0 0"></div>
<div class="t" style="left:989.80px;top:198.21px;font-size:11.4px;letter-spacing:0.938px;color:#262626;-webkit-text-stroke:0.15px #262626">Add Product</div>
<div class="t" style="left:989.80px;top:225.81px;font-size:11.4px;letter-spacing:-0.400px;color:#262626;-webkit-text-stroke:0.15px #262626">PO</div>
<div class="t" style="left:989.80px;top:253.41px;font-size:11.4px;letter-spacing:0.349px;color:#262626;-webkit-text-stroke:0.15px #262626">Sales PO</div>
<div class="t" style="left:989.80px;top:281.01px;font-size:11.4px;letter-spacing:0.999px;color:#262626;-webkit-text-stroke:0.15px #262626">Generate Invoice</div>
<div class="t" style="left:989.80px;top:308.61px;font-size:11.4px;letter-spacing:0.696px;color:#262626;-webkit-text-stroke:0.15px #262626">View Supplier List</div>
<div class="t" style="left:989.80px;top:336.21px;font-size:11.4px;letter-spacing:0.781px;color:#262626;-webkit-text-stroke:0.15px #262626">Export Inventory Report</div>
<div class="a" style="left:989.6px;top:244.1px;width:161.2px;height:1px;background:#e3e3e3"></div>
<div class="a" style="left:989.6px;top:271.7px;width:161.2px;height:1px;background:#e3e3e3"></div>
<div class="a" style="left:989.6px;top:299.3px;width:161.2px;height:1px;background:#e3e3e3"></div>
<div class="a" style="left:989.6px;top:326.9px;width:161.2px;height:1px;background:#e3e3e3"></div>
<div class="a" style="left:989.6px;top:354.5px;width:161.2px;height:1px;background:#e3e3e3"></div>
</body></html>
